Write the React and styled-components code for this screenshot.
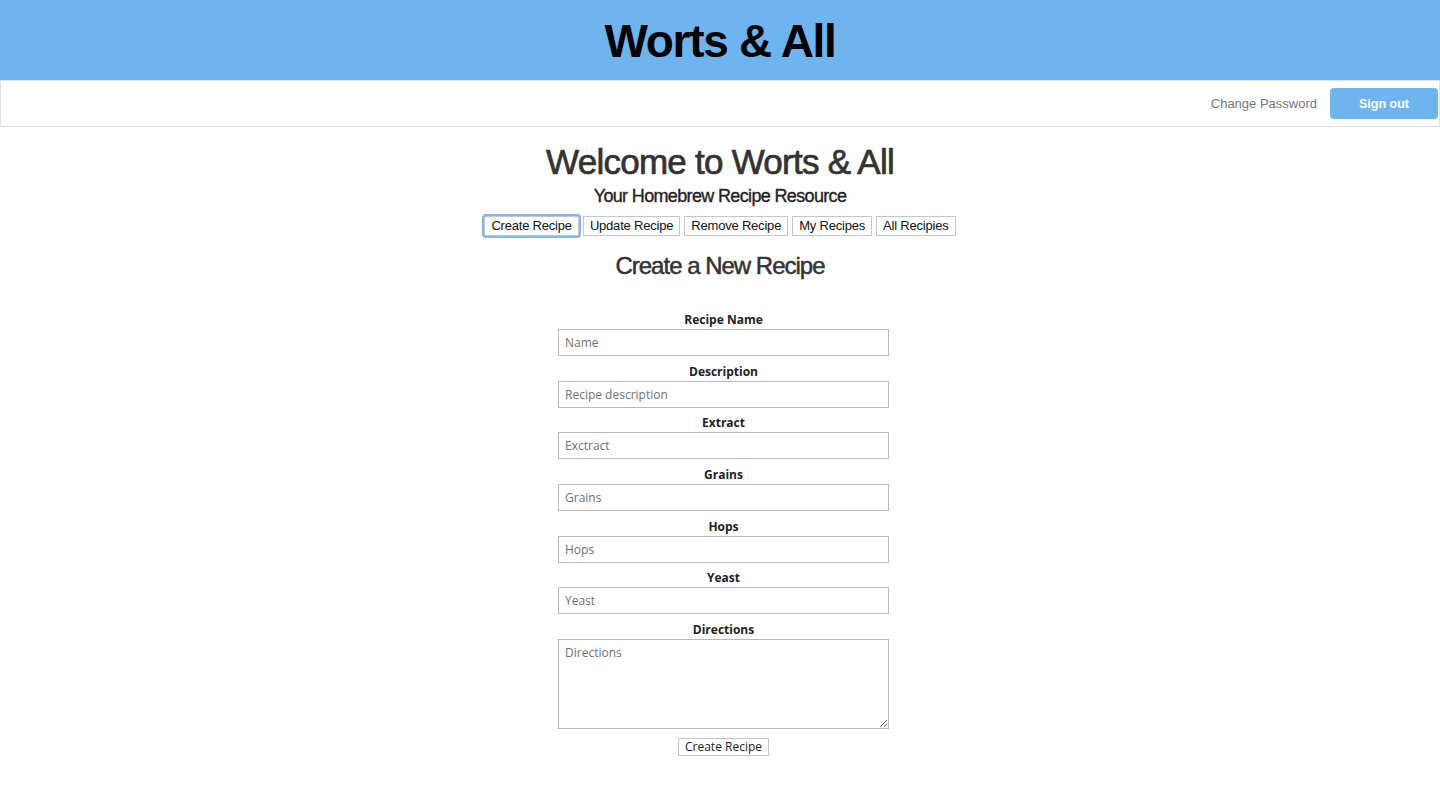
import React from "react";
import styled, { createGlobalStyle } from "styled-components";

const GlobalStyle = createGlobalStyle`
  html, body {
    margin: 0;
    padding: 0;
    background: #ffffff;
    font-family: "Liberation Sans", Arial, sans-serif;
    color: #333333;
  }
  * { box-sizing: border-box; }
`;

const Header = styled.header`
  height: 80px;
  background: #6eb5f0;
  display: flex;
  align-items: center;
  justify-content: center;
`;

const Brand = styled.h1`
  margin: 0;
  font-family: "Liberation Sans", Arial, sans-serif;
  font-weight: 700;
  font-size: 46px;
  letter-spacing: -1.3px;
  line-height: 1;
  color: #000000;
  padding-top: 2px;
`;

const NavBar = styled.nav`
  height: 47px;
  border: 1px solid #e2e2e2;
  display: flex;
  align-items: center;
  justify-content: flex-end;
  gap: 13px;
  padding-right: 1px;
`;

const NavLink = styled.a`
  font-size: 13px;
  color: #777777;
  text-decoration: none;
  cursor: pointer;
`;

const SignOut = styled.button`
  width: 108px;
  height: 31px;
  border: none;
  border-radius: 4px;
  background: #6eb5f0;
  color: #ffffff;
  font-family: "Liberation Sans", Arial, sans-serif;
  font-weight: 700;
  font-size: 12.5px;
  cursor: pointer;
`;

const Main = styled.main`
  display: flex;
  flex-direction: column;
  align-items: center;
`;

const Title = styled.h1`
  margin: 16px 0 0;
  font-size: 35px;
  font-weight: 400;
  -webkit-text-stroke: 0.7px #333333;
  letter-spacing: -0.75px;
  line-height: 38px;
  color: #333333;
`;

const Subtitle = styled.h4`
  margin: 5px 0 0;
  font-size: 18px;
  font-weight: 400;
  -webkit-text-stroke: 0.35px #222222;
  letter-spacing: -0.65px;
  line-height: 20px;
  color: #222222;
`;

const ButtonRow = styled.div`
  display: flex;
  gap: 4px;
  margin-top: 10px;
`;

const TabButton = styled.button`
  height: 20px;
  padding: 0 6px;
  border: 1px solid #c6c6c6;
  border-radius: ${(p) => (p.$focused ? "2px" : "0")};
  background: #ffffff;
  color: #111111;
  font-family: "Liberation Sans", Arial, sans-serif;
  font-size: 13px;
  letter-spacing: -0.2px;
  line-height: 18px;
  cursor: pointer;
  box-shadow: ${(p) => (p.$focused ? "0 0 0 2px #80b6f2" : "none")};
`;

const SectionTitle = styled.h3`
  margin: 17px 0 0;
  font-size: 24px;
  font-weight: 400;
  -webkit-text-stroke: 0.5px #333333;
  letter-spacing: -1px;
  line-height: 26px;
  color: #333333;
`;

const Form = styled.form`
  margin: 33px 0 0 7px;
  width: 331px;
  display: flex;
  flex-direction: column;
  align-items: center;
`;

const Label = styled.label`
  display: block;
  margin-top: ${(p) => (p.$first ? "0" : "7.67px")};
  height: 16px;
  margin-bottom: 1px;
  font-family: "Open Sans", "DejaVu Sans", sans-serif;
  font-weight: 700;
  font-size: 12px;
  line-height: 16px;
  color: #222222;
  text-align: center;
`;

const fieldStyles = `
  width: 331px;
  border: 1px solid #b9b9b9;
  border-radius: 0;
  background: #ffffff;
  font-family: "Open Sans", "DejaVu Sans", sans-serif;
  font-size: 12px;
  color: #333333;
  padding: 0 6px;
  outline: none;
  &::placeholder { color: #707070; opacity: 1; }
`;

const Input = styled.input`
  ${fieldStyles}
  height: 27px;
`;

const TextArea = styled.textarea`
  ${fieldStyles}
  height: 90px;
  padding-top: 5px;
  line-height: 16px;
  resize: both;
`;

const Submit = styled.button`
  margin-top: 9px;
  height: 18px;
  padding: 0 6px;
  border: 1px solid #c6c6c6;
  background: #ffffff;
  font-family: "Open Sans", "DejaVu Sans", sans-serif;
  font-size: 12px;
  line-height: 16px;
  color: #222222;
  cursor: pointer;
`;

const fields = [
  { label: "Recipe Name", placeholder: "Name" },
  { label: "Description", placeholder: "Recipe description" },
  { label: "Extract", placeholder: "Exctract" },
  { label: "Grains", placeholder: "Grains" },
  { label: "Hops", placeholder: "Hops" },
  { label: "Yeast", placeholder: "Yeast" },
];

const tabs = ["Create Recipe", "Update Recipe", "Remove Recipe", "My Recipes", "All Recipies"];

export default function App() {
  return (
    <>
      <GlobalStyle />
      <Header>
        <Brand>Worts &amp; All</Brand>
      </Header>
      <NavBar>
        <NavLink>Change Password</NavLink>
        <SignOut type="button">Sign out</SignOut>
      </NavBar>
      <Main>
        <Title>Welcome to Worts &amp; All</Title>
        <Subtitle>Your Homebrew Recipe Resource</Subtitle>
        <ButtonRow>
          {tabs.map((t, i) => (
            <TabButton key={t} type="button" $focused={i === 0}>
              {t}
            </TabButton>
          ))}
        </ButtonRow>
        <SectionTitle>Create a New Recipe</SectionTitle>
        <Form onSubmit={(e) => e.preventDefault()}>
          {fields.map((f, i) => (
            <React.Fragment key={f.label}>
              <Label $first={i === 0}>{f.label}</Label>
              <Input placeholder={f.placeholder} />
            </React.Fragment>
          ))}
          <Label>Directions</Label>
          <TextArea placeholder="Directions" />
          <Submit type="submit">Create Recipe</Submit>
        </Form>
      </Main>
    </>
  );
}
